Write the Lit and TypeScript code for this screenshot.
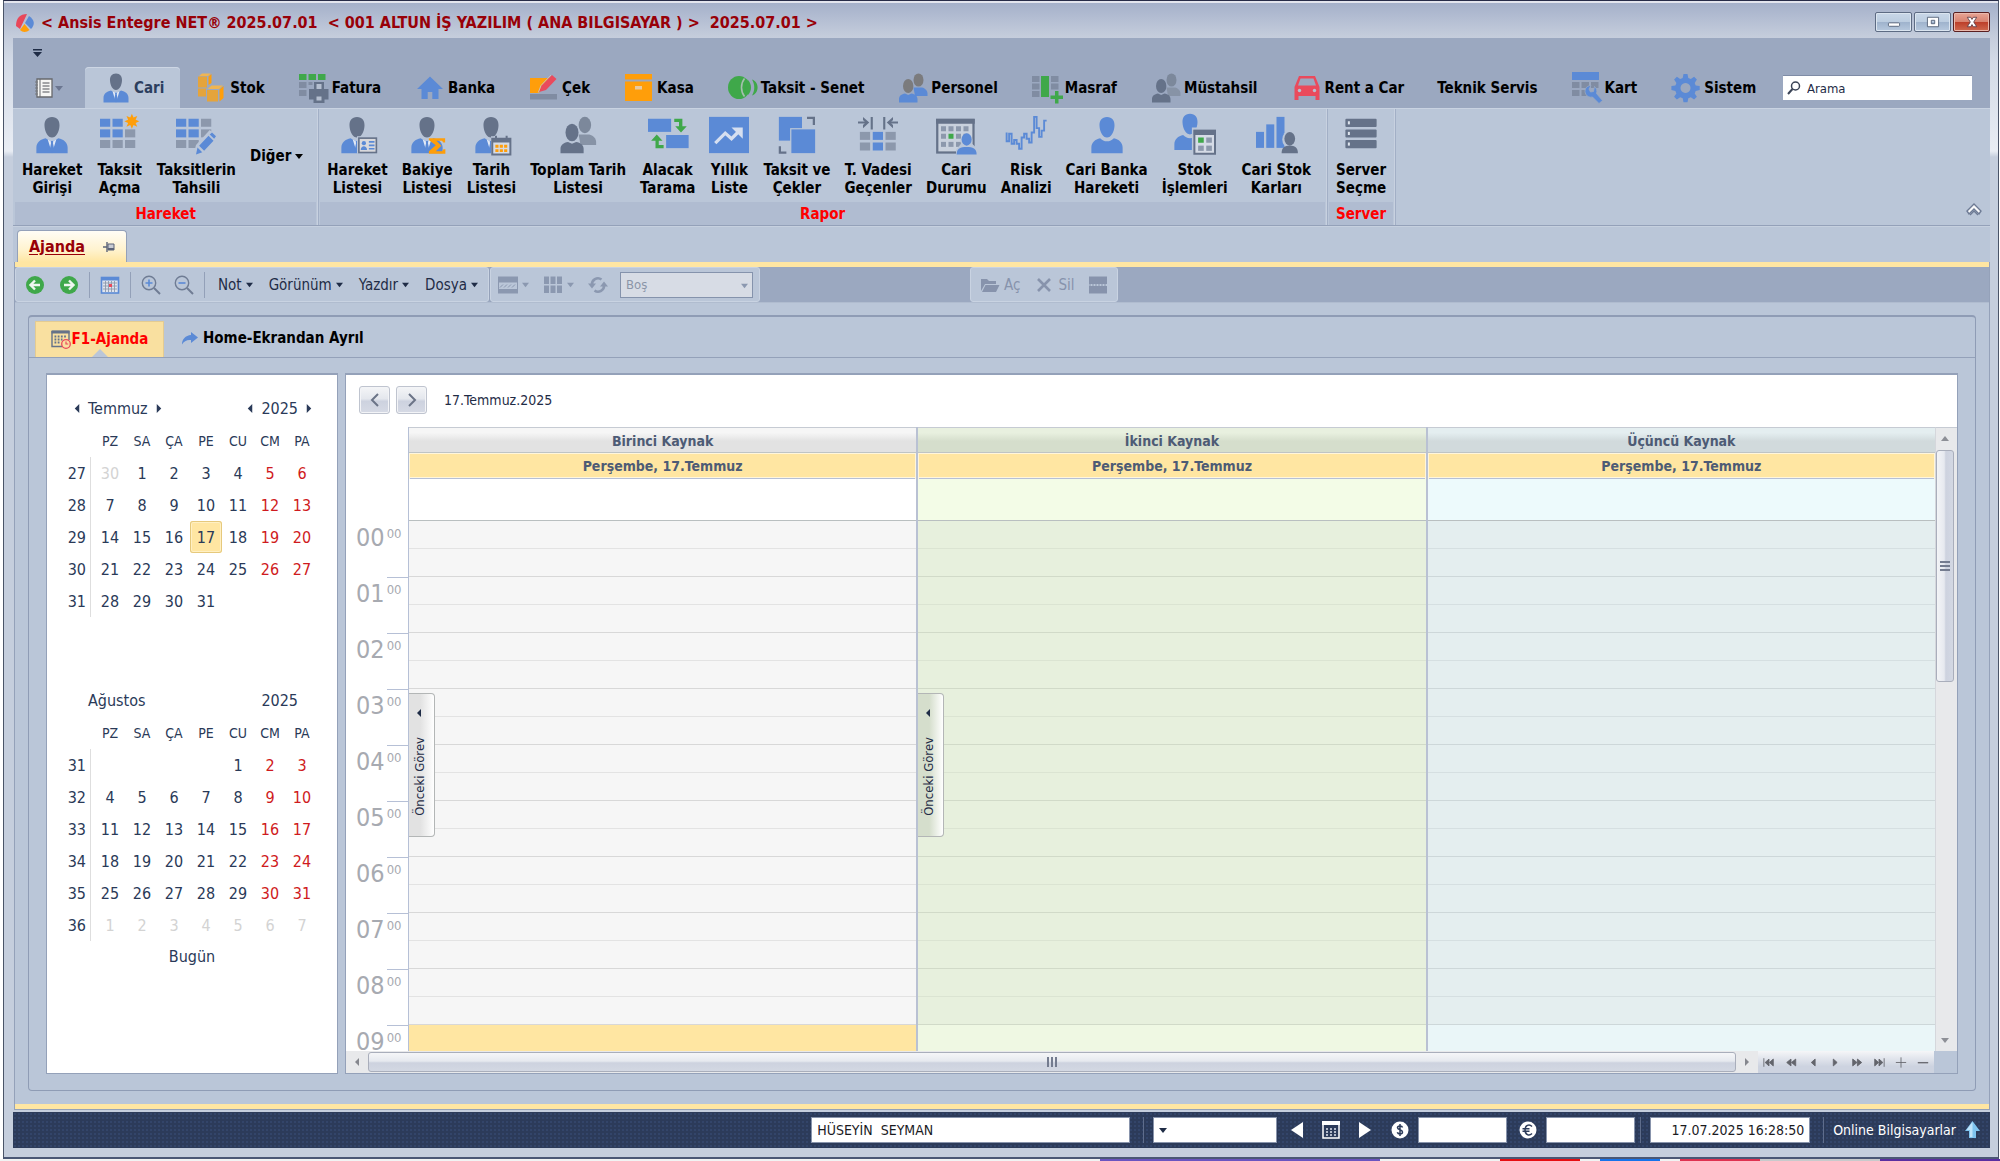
import { LitElement, html, svg, css, nothing } from "lit";
import { customElement } from "lit/decorators.js";
import { classMap } from "lit/directives/class-map.js";

const BLUE = "#5b8ad6";
const GRAY = "#657289";
const SOFT = "#8c98ac";
const GREEN = "#3fa84a";
const ORANGE = "#ff9e0a";
const RED = "#ea4a5c";
const PAPER = "#bac6d8";

const bust = (head: string, body: string) => svg`
  <path fill=${head} d="M16 1.5c-4.2 0-6.2 3-6 7 .2 5 2.800 9.500 6 9.500s5.800-4.500 6-9.500c.2-4-1.800-7-6-7z"/>
  <path fill=${body} d="M10.500 18.500c1.500 1.600 3.300 2.500 5.500 2.500s4-.9 5.500-2.500c4 .8 7 3.500 7 7.500v4.500h-25V26c0-4 3-6.700 7-7.500z"/>`;
const suit = () => svg`
  <path fill=${GRAY} d="M16 1.500c-4.200 0-6.200 3-6 7 .2 5 2.800 9.500 6 9.500s5.800-4.500 6-9.500c.2-4-1.800-7-6-7z"/>
  <path fill=${BLUE} d="M11 18.500c1.400 1.300 3 2 5 2s3.600-.7 5-2c4.400.8 7.500 3.500 7.500 7.500v4.500h-25V26c0-4 3.100-6.700 7.500-7.500z"/>
  <path fill="#e3eaf6" d="M12.600 19.500c1.100.6 2.200 1 3.400 1s2.300-.4 3.400-1L16.800 28h-1.600z"/>
  <path fill=${BLUE} d="M15 20.800h2l-.2 1.700 1 5-1.800 3-1.800-3 1-5z"/>`;
const pair = (c1: string, c2: string, b1: string, b2: string) => svg`
  <ellipse cx="21.500" cy="8" rx="5" ry="6.600" fill=${c2}/>
  <path fill=${b2} d="M16.500 15.500h8.500c3 .8 5.500 3 5.500 6V24H18z"/>
  <ellipse cx="11.200" cy="14" rx="5.200" ry="7" fill=${c1}/>
  <path fill=${b1} d="M8 21.500l3.200 1.500 3.300-1.500c3.500.5 6 2.500 6 5.500v3.500H2V27c0-3 2.500-5 6-5.500z"/>`;
const cell = (x: number, y: number, c: string, w = 8.2, h = 6.4) =>
  svg`<rect x=${x} y=${y} width=${w} height=${h} fill=${c}/>`;

const icons: Record<string, unknown> = {
  person: suit(),
  bust: bust(BLUE, BLUE),
  pair: pair(GRAY, "#7c889b", GRAY, "#8793a6"),
  staff: pair("#7b7b7d", "#7b7b7d", BLUE, BLUE),
  personCard: svg`${suit()}
    <rect x="16" y="17" width="17" height="14" fill=${PAPER}/>
    <rect x="17.500" y="18.500" width="14" height="11.500" fill="#d9d9dc" stroke=${GRAY} stroke-width="1.300"/>
    <circle cx="21.500" cy="22.500" r="1.700" fill=${BLUE}/><path d="M19 28c0-4 5-4 5 0z" fill=${BLUE}/>
    <path d="M25.500 21.500h4.500M25.500 24.300h4.500M25.500 27h4.500" stroke=${BLUE} stroke-width="1.300"/>`,
  personSum: svg`${suit()}
    <path d="M17.500 18.500h13v3.500h-1.500l-1-1.400h-4.500l4 4-4.500 4.400h5l1.200-1.700h1.500v3.700H17.500v-2l5.500-4.800-5.500-4.200z" fill=${ORANGE}/>`,
  personCalendar: svg`${suit()}
    <rect x="16" y="17" width="16" height="15" fill=${PAPER}/>
    <path d="M17 19h14.500v12.500H17zM20 16.500v4M28.500 16.500v4" fill="#d5dbe6" stroke=${GRAY} stroke-width="1.600"/>
    <path d="M17 19h14.500v3H17z" fill=${GRAY}/>
    <path d="M19.500 25h2.500M23 25h2.500M26.500 25h2.500M19.500 28.500h2.500M23 28.500h2.500M26.500 28.500h2.500" stroke=${ORANGE} stroke-width="2.300"/>`,
  gridNew: svg`${cell(0, 3, BLUE)}${cell(10, 3, BLUE)}${cell(0, 11.5, BLUE)}${cell(10, 11.5, BLUE)}${cell(20, 11.5, SOFT)}
    ${cell(0, 20, SOFT)}${cell(10, 20, SOFT)}${cell(20, 20, SOFT)}
    <path fill=${ORANGE} d="M25.500-1l1.300 3 3-1.300L28.500 3.700l3 1.300-3 1.300 1.300 3-3-1.300-1.300 3-1.300-3-3 1.300 1.300-3-3-1.300 3-1.300-1.300-3 3 1.300z"/>`,
  gridEdit: svg`${cell(0, 3, BLUE)}${cell(10, 3, BLUE)}${cell(20, 3, SOFT)}${cell(0, 11.5, BLUE)}${cell(10, 11.5, BLUE)}
    ${cell(20, 11.5, SOFT)}${cell(0, 20, SOFT)}${cell(10, 20, SOFT)}
    <path d="M14 32l2-8L27 12l6 5-11 13z" fill=${PAPER}/>
    <path d="M16 31.500l1.200-5.500 3.800 3.800zM18.500 24.500l7.500-8 4 4-7.500 8zM27 15.500l1.800-1.500 3.200 3-1.500 2z" fill=${BLUE}/>`,
  swap: svg`<rect x="0" y="3" width="18.500" height="10.500" fill=${BLUE}/><rect x="14.500" y="16" width="18" height="10.500" fill=${BLUE}/>
    <path d="M21 3h6.500v6H31l-4.600 5-4.600-5h3V5.500H21zM12.500 26.500H6v-6H2.500L7 15.500l4.600 5H8.600V24h3.900z" fill=${GREEN}/>`,
  chart: svg`<rect x="0" y="1.500" width="32" height="29" fill=${BLUE}/>
    <path d="M5 22.500l8-8 5 4.500 5-5" fill="none" stroke="#d6dff0" stroke-width="2.600"/><path d="M18 10h9v9z" fill="#d6dff0"/>`,
  layers: svg`<rect x="1.500" y="1.500" width="18.500" height="19" fill=${BLUE}/><rect x="10.500" y="10.500" width="21" height="21" fill=${PAPER}/>
    <rect x="11.500" y="11.500" width="19" height="19" fill=${BLUE}/>
    <path d="M24 2.300h5.500V8M2.300 25v5H7.500" fill="none" stroke=${GRAY} stroke-width="1.800"/>`,
  due: svg`${cell(1.5, 13.5, SOFT)}${cell(11.8, 13.5, BLUE)}${cell(22, 13.5, SOFT)}${cell(1.5, 22, SOFT)}${cell(11.8, 22, BLUE)}${cell(22, 22, SOFT)}
    <path d="M0 6h7M25 6h7M11 1.500v10M21 1.500v10" stroke=${GRAY} stroke-width="1.700"/>
    <path d="M4 1.500l5 4.500-5 4.500V8l2-2-2-2zM28 1.500L23 6l5 4.500V8l-2-2 2-2z" fill=${GRAY}/>`,
  calendarPerson: svg`<rect x="1" y="4" width="29" height="26" fill="#c9d1dd" stroke=${GRAY} stroke-width="1.800"/><rect x="0" y="3" width="31" height="4" fill=${GRAY}/>
    ${[4, 10, 16, 22].map((x) => [9, 15, 21.5].map((y) => cell(x, y, x === 10 && y === 15 ? GREEN : SOFT, 4, 4)))}
    <path d="M16 32v-4l4-5c-3-9 11-11 9 0l5 5v4z" fill=${PAPER}/>
    <ellipse cx="24.500" cy="19.500" rx="4" ry="5" fill=${BLUE}/><path d="M16.500 31.500c0-5 3-6 8-6s8 1 8 6z" fill=${BLUE}/>`,
  risk: svg`<path d="M.5 14v7h2v-6h2v8h2v-3h2v3h2v4h2v-9h2v-3h2v4h2v3h2v-8h2V1.500h2v9h2v7h2v-5h2v-8h2" fill="none" stroke=${BLUE} stroke-width="1.500"/>`,
  bustCalendar: svg`<g transform="translate(-4 -2.500)">${bust(BLUE, BLUE)}</g><rect x="13.500" y="10" width="20" height="22" fill=${PAPER}/>
    <rect x="15.500" y="12.500" width="16.500" height="18.500" fill="#d5dbe6" stroke=${GRAY} stroke-width="1.600"/><rect x="15" y="12" width="17.500" height="4" fill=${GRAY}/>
    ${cell(18.5, 18, GREEN, 4.5, 4.2)}${cell(25, 18, SOFT, 4.5, 4.2)}${cell(18.5, 24.5, SOFT, 4.5, 4.2)}${cell(25, 24.5, SOFT, 4.5, 4.2)}`,
  barsPerson: svg`${cell(0, 13.5, BLUE, 6.4, 12.8)}${cell(8.2, 7.5, BLUE, 6.4, 18.8)}${cell(16.4, 1.5, BLUE, 6.4, 24.8)}
    <ellipse cx="27" cy="19.500" rx="6" ry="7" fill=${PAPER}/>
    <ellipse cx="27" cy="19" rx="4.300" ry="5.500" fill=${GRAY}/><path d="M20.500 30.500c0-5 2.500-6 6.500-6s6.500 1 6.500 6z" fill=${GRAY}/>`,
  server: svg`${[3, 11.5, 20].map((y) => svg`<rect x="3.500" y=${y} width="25" height="6.500" rx=".8" fill=${GRAY}/><rect x="5.500" y=${y + 2} width="1.600" height="2.500" fill="#dfe5ee"/>`)}`,

  boxes: svg`<path d="M2 4.500h9v11H2z" fill="#e5a43c"/><path d="M3 4l3-2.500h9L12 4z" fill="#f0b552"/><path d="M12.500 4.500l3-2.500v9l-3 2z" fill=${ORANGE}/>
    <path d="M2 16.500h8v8H2z" fill="#e5a43c"/><path d="M11 18h11v11.500H11z" fill="#e5a43c"/>
    <path d="M11.500 17l4-3.500h11.500L23 17z" fill="#f0b552"/><path d="M23.500 17.500l4-3.500v12l-4 3.500z" fill=${ORANGE}/>`,
  printer: svg`${cell(1, 2, GREEN, 7.5, 6)}${cell(10.5, 2, GREEN, 7.5, 6)}${cell(20, 2, GREEN, 7.5, 6)}${cell(1, 10, "#808ca2", 7.5, 6)}${cell(10.5, 10, "#808ca2", 4, 3)}${cell(1, 18, "#808ca2", 7.5, 6)}
    <path d="M16 10h10v7h4.500v10.500h-4V31h-11v-3.500H11V17h5z" fill=${GRAY}/><path d="M18.500 12h5v5h-5zM18.500 24.500h5v4h-5z" fill="#b5bfd0"/>`,
  home: svg`<path d="M16 4.500L3 17h4.500v10h6.200v-7h4.600v7h6.200V17H29z" fill=${BLUE}/>`,
  cheque: svg`<path d="M2 6h19L11 21H2z" fill=${ORANGE}/><path d="M11 20l2.500-6.500L24 3l4.500 4L18 18z" fill=${RED}/><path d="M10.300 20.500l2.700-7L23 3" fill="none" stroke="#c9c0b8" stroke-width="1"/><rect x="2" y="22" width="27" height="5.500" fill="#808ca2"/>`,
  archive: svg`<rect x="2" y="2" width="27" height="5.500" fill=${ORANGE}/><rect x="2" y="9.500" width="27" height="19.500" fill=${ORANGE}/><rect x="12" y="14" width="7" height="3.500" fill="#e8c9a0"/>`,
  coins: svg`<ellipse cx="12" cy="15.500" rx="11" ry="11.500" fill=${GREEN}/><path d="M17.500 6.500c-4 5-4 13 0 18" stroke="#a5bfae" stroke-width="1.600" fill="none"/>
    <path d="M21 8c4 4 4 11 0 15-4-4-4-11 0-15z" fill=${GREEN}/><path d="M25 7.500c7 2 8 13.500 0 16 3-5 3-11 0-16z" fill=${GREEN}/>`,
  columns: svg`${[4, 11.5, 19].map((y) => svg`${cell(1, y, "#808ca2", 7.5, 6)}${y < 19 ? cell(20, y, "#808ca2", 7.5, 6) : nothing}`)}
    <rect x="10" y="4" width="8" height="21" fill=${GREEN}/><path d="M24 19h3.500v4.500H32V27h-4.500v4.500H24V27h-4.500v-3.500H24z" fill=${GREEN}/>`,
  car: svg`<path d="M8 4h16l4.500 11v13h-4v-4h-17v4h-4V15z" fill=${RED}/><path d="M9.500 6.500h13l2.500 7H7z" fill="#9ba8c0"/><circle cx="8.500" cy="18.500" r="1.700" fill="#b9c0d0"/><circle cx="23.500" cy="18.500" r="1.700" fill="#b9c0d0"/>`,
  gridTool: svg`<rect x="1" y="0" width="27" height="8" fill=${BLUE}/>${cell(1, 10, "#808ca2", 7.5, 6)}${cell(10.5, 10, "#808ca2", 7.5, 6)}${cell(20, 10, "#808ca2", 7.5, 6)}${cell(1, 18, "#808ca2", 7.5, 6)}${cell(10.5, 18, "#808ca2", 5, 6)}
    <path d="M20 13.500c-5 0-7.500 5-5 9 1.500 2.500 4 3 6.500 2.500l6.500 6.500 3.500-3-6-7c1-3 0-5.500-2-7l-1 5-3 .5-1.500-3z" fill=${BLUE} stroke="#9ba8c0" stroke-width=".8"/>`,
  gear: svg`<path fill-rule="evenodd" fill=${BLUE} d="M13.500 2h4l.8 4 2.500 1 3.300-2.300 2.800 2.800-2.200 3.400 1 2.500 4 .7v4l-4 .8-1 2.500 2.200 3.300-2.800 2.800-3.300-2.200-2.500 1-.8 4h-4l-.8-4-2.500-1-3.300 2.200-2.800-2.800 2.300-3.300-1-2.500-4-.8v-4l4-.7 1-2.500-2.300-3.400 2.800-2.800L10.200 7l2.500-1zM15.500 11a5 5 0 1 0 .01 0z"/>`,
};

const icon = (name: string, cls: string) =>
  html`<svg class=${cls} viewBox="0 0 32 32" aria-hidden="true">${icons[name]}</svg>`;

const tri = (dir: "down" | "up" | "left" | "right", cls = "tri") => {
  const d = { down: "M0 2h8L4 7z", up: "M0 6h8L4 1z", left: "M6 0v8L2 4z", right: "M2 0v8l4-4z" }[dir];
  return html`<svg class=${cls} viewBox="0 0 8 8" aria-hidden="true"><path d=${d} fill="currentColor"/></svg>`;
};

interface Tool { icon: string; top: string; bottom: string; }

const TABS: [string, string][] = [
  ["person", "Cari"], ["boxes", "Stok"], ["printer", "Fatura"], ["home", "Banka"], ["cheque", "Çek"],
  ["archive", "Kasa"], ["coins", "Taksit - Senet"], ["staff", "Personel"], ["columns", "Masraf"],
  ["pair", "Müstahsil"], ["car", "Rent a Car"], ["", "Teknik Servis"], ["gridTool", "Kart"], ["gear", "Sistem"],
];

const ENTRY: Tool[] = [
  { icon: "person", top: "Hareket", bottom: "Girişi" },
  { icon: "gridNew", top: "Taksit", bottom: "Açma" },
  { icon: "gridEdit", top: "Taksitlerin", bottom: "Tahsili" },
];

const REPORT: Tool[] = [
  { icon: "personCard", top: "Hareket", bottom: "Listesi" },
  { icon: "personSum", top: "Bakiye", bottom: "Listesi" },
  { icon: "personCalendar", top: "Tarih", bottom: "Listesi" },
  { icon: "pair", top: "Toplam Tarih", bottom: "Listesi" },
  { icon: "swap", top: "Alacak", bottom: "Tarama" },
  { icon: "chart", top: "Yıllık", bottom: "Liste" },
  { icon: "layers", top: "Taksit ve", bottom: "Çekler" },
  { icon: "due", top: "T. Vadesi", bottom: "Geçenler" },
  { icon: "calendarPerson", top: "Cari", bottom: "Durumu" },
  { icon: "risk", top: "Risk", bottom: "Analizi" },
  { icon: "bust", top: "Cari Banka", bottom: "Hareketi" },
  { icon: "bustCalendar", top: "Stok", bottom: "İşlemleri" },
  { icon: "barsPerson", top: "Cari Stok", bottom: "Karları" },
];

const DAYS = ["PZ", "SA", "ÇA", "PE", "CU", "CM", "PA"];

interface Month { name: string; year: string; nav: boolean; firstWeek: number; weeks: number; offset: number; length: number; prev: number; trailing: boolean; today: number; }

const MONTHS: Month[] = [
  { name: "Temmuz", year: "2025", nav: true, firstWeek: 27, weeks: 5, offset: 1, length: 31, prev: 30, trailing: false, today: 17 },
  { name: "Ağustos", year: "2025", nav: false, firstWeek: 31, weeks: 6, offset: 4, length: 31, prev: 0, trailing: true, today: 0 },
];

const RESOURCES = [
  { name: "Birinci Kaynak", tone: "plain", previous: true },
  { name: "İkinci Kaynak", tone: "green", previous: true },
  { name: "Üçüncü Kaynak", tone: "aqua", previous: false },
];
const HOURS = Array.from({ length: 10 }, (_, i) => String(i).padStart(2, "0"));

const FONT = css`
  * { box-sizing: border-box; }
  button, input, select { font: inherit; color: inherit; margin: 0; border-radius: 0; }
  button { background: none; border: 0; padding: 0; display: inline-flex; align-items: center; justify-content: center; }
  svg { display: block; flex: none; overflow: visible; }
  .tri { width: 8px; height: 8px; }
`;

@customElement("ribbon-bar")
export class RibbonBar extends LitElement {
  static styles = [FONT, css`
    :host { display: block; font-weight: bold; font-size: 15px; color: #000; }
    .head { background: #9ba8c0; }
    .quick { height: 29px; display: flex; align-items: center; padding-left: 20px; color: #1f2c46; }
    .quick svg { width: 9px; height: 8px; }
    .tabs { height: 41px; display: flex; align-items: stretch; }
    .file { width: 72px; gap: 2px; color: #6b7690; }
    .file .sheet { width: 18px; height: 20px; }
    .tab { padding: 0 17px 0 16px; gap: 2px; white-space: nowrap; height: 41px; border: 0; }
    .tab.on { padding: 0 16px 0 15px; background: #bac6d8; color: #2c3e5e; border-radius: 4px 4px 0 0; box-shadow: inset 0 1px #cdd6e4; }
    .tabIcon { width: 32px; height: 32px; }
    .search { margin: 8px 18px 8px auto; width: 189px; height: 25px; background: #fff; border-top: 1px solid #7f8ca6; display: flex; align-items: center; padding-left: 4px; gap: 6px; }
    .search svg { width: 14px; height: 14px; }
    .search input { border: 0; outline: 0; background: none; width: 100%; min-width: 0; padding: 0; font-weight: normal; font-size: 13px; }
    .search input::placeholder { color: #1f2c46; opacity: 1; }
    .body { height: 118px; display: flex; background: #bac6d8; border-top: 1px solid #c9d3e2; border-bottom: 1px solid #94a1b9; }
    .group { display: flex; flex-direction: column; border-right: 1px solid #a2afc6; padding: 0 2px; box-shadow: inset -1px 0 #c8d1e0; }
    .group + .group { padding-left: 1px; }
    .tools { flex: 1; display: flex; align-items: flex-start; }
    .entry { gap: 1px; }
    .report { padding-right: 7px; }
    .caption { height: 23px; background: #b0bcd1; color: #f00; text-align: center; line-height: 24px; }
    .tool { flex-direction: column; padding: 6px 7px 0; line-height: 18px; }
    .toolIcon { width: 40px; height: 40px; margin-bottom: 6px; }
    .more { height: 93px; padding: 0 13px 0 6px; gap: 4px; }
    .collapse { margin: auto 8px 8px auto; }
    .collapse svg { width: 16px; height: 14px; }
  `];

  private tool(t: Tool) {
    return html`<button class="tool">${icon(t.icon, "toolIcon")}<span>${t.top}</span><span>${t.bottom}</span></button>`;
  }

  render() {
    return html`
      <div class="head">
        <div class="quick"><button aria-label="Hızlı erişim"><svg viewBox="0 0 9 8"><path d="M0 0h9v1.500H0zM0 3h9L4.500 8z" fill="currentColor"/></svg></button></div>
        <div class="tabs" role="tablist">
          <button class="file" aria-label="Dosya">
            <svg class="sheet" viewBox="0 0 18 20"><path d="M2 1h15v18H2z" fill="#f6f6f4" stroke="#67686c" stroke-width="1.300"/><path d="M5 1v18" stroke="#67686c"/><path d="M7.500 5h7M7.500 8h7M7.500 11h7M7.500 14h7" stroke="#505258" stroke-width="1.200"/><path d="M0 4h3M0 7h3M0 10h3M0 13h3M0 16h3" stroke="#77787c"/></svg>
            ${tri("down")}
          </button>
          ${TABS.map(([ic, label], i) => html`
            <button role="tab" aria-selected=${i === 0} class=${classMap({ tab: true, on: i === 0 })}>${ic ? icon(ic, "tabIcon") : nothing}<span>${label}</span></button>`)}
          <label class="search">
            <svg viewBox="0 0 14 14"><circle cx="8.500" cy="5" r="4" fill="none" stroke="#3a4356" stroke-width="1.500"/><path d="M5.500 8L1 13" stroke="#3a4356" stroke-width="2"/></svg>
            <input type="search" placeholder="Arama" aria-label="Arama">
          </label>
        </div>
      </div>
      <div class="body">
        <section class="group">
          <div class="tools entry">${ENTRY.map((t) => this.tool(t))}<button class="more">Diğer ${tri("down")}</button></div>
          <div class="caption">Hareket</div>
        </section>
        <section class="group">
          <div class="tools report">${REPORT.map((t) => this.tool(t))}</div>
          <div class="caption">Rapor</div>
        </section>
        <section class="group">
          <div class="tools">${this.tool({ icon: "server", top: "Server", bottom: "Seçme" })}</div>
          <div class="caption">Server</div>
        </section>
        <button class="collapse" aria-label="Şeridi daralt"><svg viewBox="0 0 16 14"><path d="M1 8l7-7 7 7-2 3-5-5-5 5z" fill="#f7f8fa" stroke="#6d7a94" stroke-width="1.400"/><path d="M4 12l4-4 4 4" fill="none" stroke="#6d7a94" stroke-width="1.400"/></svg></button>
      </div>`;
  }
}

@customElement("agenda-toolbar")
export class AgendaToolbar extends LitElement {
  static styles = [FONT, css`
    :host { display: flex; height: 36px; background: #9ba8c0; border-bottom: 1px solid #b0bccf; font-size: 15px; color: #1f2c46; }
    .bar { display: flex; align-items: center; background: #bac6d8; border: 1px solid #c9d3e2; border-radius: 3px; }
    .main { width: 474px; padding-left: 9px; }
    .views { width: 270px; margin-left: 1px; padding-left: 7px; color: #8b98b0; box-shadow: -1px 0 #94a1b9; }
    .acts { width: 148px; margin-left: 210px; padding-left: 9px; color: #8793ac; }
    .ic { width: 20px; height: 20px; }
    .round { margin-right: 14px; }
    .round + .round { margin-right: 10px; }
    .sep { width: 1px; height: 26px; background: #93a0b8; }
    .cal { margin: 0 10px; }
    .zoom { margin-left: 10px; }
    .zoom + .zoom { margin: 0 10px 0 13px; }
    .menu { gap: 4px; margin-left: 13px; white-space: nowrap; }
    .menu + .menu { margin-left: 16px; }
    .tri { width: 7px; height: 7px; }
    .drop { gap: 4px; margin-right: 14px; }
    .combo { position: relative; margin-left: 12px; }
    select { appearance: none; width: 133px; height: 26px; padding: 0 5px; border: 1px solid #8593ac; background: #d7dce5; color: #8b95a8; opacity: 1; font-size: 13px; display: block; }
    .combo .tri { position: absolute; right: 5px; top: 10px; }
    .act { gap: 4px; margin-right: 14px; }
  `];

  render() {
    const round = (d: string, label: string) => html`<button class="round" aria-label=${label}><svg class="ic" viewBox="0 0 20 20"><circle cx="10" cy="10" r="9" fill=${GREEN}/><path d=${d} fill="none" stroke="#eef6ee" stroke-width="2.400"/></svg></button>`;
    const lens = (plus: boolean) => html`<button class="zoom" aria-label=${plus ? "Yakınlaştır" : "Uzaklaştır"}><svg class="ic" viewBox="0 0 20 20"><circle cx="8" cy="8" r="6.700" fill="none" stroke="#6f7c94" stroke-width="1.400"/><path d="M13 13l6 6" stroke="#6f7c94" stroke-width="2"/><path d=${plus ? "M4.500 8h7M8 4.500v7" : "M4.500 8h7"} stroke=${BLUE} stroke-width="1.600"/></svg></button>`;
    return html`
      <div class="bar main">
        ${round("M15 10H6M10 5.500L5.500 10l4.500 4.500", "Geri")}${round("M5 10h9M10 5.500l4.500 4.500-4.500 4.500", "İleri")}
        <i class="sep"></i>
        <button class="cal" aria-label="Bugüne git"><svg class="ic" viewBox="0 0 20 20"><rect x="1.500" y="2.500" width="17" height="15.500" fill="#dfe4ee" stroke=${BLUE} stroke-width="1.600"/><path d="M1 2h18v3.500H1z" fill=${BLUE}/><path d="M3 8h14M3 11h14M3 14h14M5.500 6v11M8.500 6v11M11.500 6v11M14.500 6v11" stroke="#8c98ac" stroke-width=".9"/><rect x="9" y="9" width="3" height="3" fill=${RED}/></svg></button>
        <i class="sep"></i>
        ${lens(true)}${lens(false)}
        <i class="sep"></i>
        ${["Not", "Görünüm", "Yazdır", "Dosya"].map((m) => html`<button class="menu">${m}${tri("down")}</button>`)}
      </div>
      <div class="bar views">
        <button class="drop" aria-label="Görünüm düzeni"><svg class="ic" viewBox="0 0 20 20"><path d="M0 1.500h20v6H0zM0 14h20v4.500H0z" fill="currentColor"/><path d="M.5 7v8M19.500 7v8" stroke="currentColor"/><path d="M2 12.500l3-3M6 12.500l3-3M10 12.500l3-3M14 12.500l3-3" stroke="currentColor"/></svg>${tri("down")}</button>
        <button class="drop" aria-label="Gruplama"><svg class="ic" viewBox="0 0 20 20">${[1, 7.5, 14].map((x) => svg`<rect x=${x} y="1.500" width="5" height="7.500" fill="currentColor"/><rect x=${x} y="10.500" width="5" height="7.500" fill="currentColor"/>`)}</svg>${tri("down")}</button>
        <button aria-label="Yenile"><svg class="ic" viewBox="0 0 20 20"><path d="M4 10a6 6 0 0 1 9.500-5.500M16 10a6 6 0 0 1-9.500 5.500" fill="none" stroke="currentColor" stroke-width="2.600"/><path d="M0 8.500h8l-4 5zM12 11.500h8l-4-5z" fill="currentColor"/></svg></button>
        <label class="combo"><select disabled aria-label="Kaynak filtresi"><option>Boş</option></select>${tri("down")}</label>
      </div>
      <div class="bar acts">
        <button class="act"><svg class="ic" viewBox="0 0 20 20"><path d="M1 4h6l2 2h7v3H5l-4 7zM5.500 10H19.500l-3.500 7H2z" fill="currentColor"/></svg>Aç</button>
        <button class="act"><svg class="ic" viewBox="0 0 20 20"><path d="M4 4l12 12M16 4L4 16" stroke="currentColor" stroke-width="2.600"/></svg>Sil</button>
        <button aria-label="Böl"><svg class="ic" viewBox="0 0 20 20"><path d="M1 1.500h18V9H1zM1 11h18v7.500H1z" fill="currentColor"/><path d="M1 10h18" stroke="currentColor" stroke-width="1" stroke-dasharray="2 1"/></svg></button>
      </div>`;
  }
}

@customElement("date-navigator")
export class DateNavigator extends LitElement {
  static styles = [FONT, css`
    :host { display: block; width: 292px; flex: none; background: #fff; border: 1px solid #94a1b9; border-top-width: 2px; padding: 16px 15px 0; color: #2a3a58; font-size: 16px; }
    .month { margin-bottom: 66px; }
    .month.last { margin-bottom: 0; }
    .title { display: flex; justify-content: space-between; height: 34px; align-items: center; }
    .pick { display: flex; align-items: center; gap: 6px; }
    .pick .tri { width: 10px; height: 9px; }
    .from { padding-left: 10px; }
    .to { padding-right: 8px; }
    table { border-collapse: collapse; table-layout: fixed; }
    th, td { width: 32px; height: 32px; padding: 0; text-align: center; font-weight: normal; }
    thead th { font-size: 14px; }
    tbody th { text-align: right; padding-right: 8px; background: linear-gradient(#dedede, #dedede) no-repeat right 3px top / 1px 100%; }
    .end { color: #cf1a20; }
    .out { color: #d3d3d3; }
    .now { background: #ffe6a2; box-shadow: inset 0 0 0 1px #e6c97c, inset 0 0 0 2px #fff0c4; border-radius: 3px; }
    .today { display: flex; width: 100%; height: 30px; }
  `];

  private day(m: Month, w: number, d: number) {
    const n = w * 7 + d + 1 - m.offset;
    let text: number | string = n;
    let out = false;
    if (n < 1) { text = m.prev ? m.prev + n : ""; out = true; }
    else if (n > m.length) { text = m.trailing ? n - m.length : ""; out = true; }
    return html`<td class=${classMap({ out, end: !out && d > 4, now: n === m.today && !out })}>${text}</td>`;
  }

  private month(m: Month, last: boolean) {
    const pick = (cls: string, text: string) => html`
      <div class="pick ${cls}">
        ${m.nav ? html`<button aria-label="Önceki">${tri("left")}</button>` : html`<i class="tri"></i>`}
        <span>${text}</span>
        ${m.nav ? html`<button aria-label="Sonraki">${tri("right")}</button>` : html`<i class="tri"></i>`}
      </div>`;
    return html`
      <div class=${classMap({ month: true, last })}>
        <div class="title">${pick("from", m.name)}${pick("to", m.year)}</div>
        <table>
          <thead><tr><td></td>${DAYS.map((d) => html`<th scope="col">${d}</th>`)}</tr></thead>
          <tbody>${Array.from({ length: m.weeks }, (_, w) => html`
            <tr><th scope="row">${m.firstWeek + w}</th>${DAYS.map((_d, d) => this.day(m, w, d))}</tr>`)}</tbody>
        </table>
      </div>`;
  }

  render() {
    return html`${MONTHS.map((m, i) => this.month(m, i === MONTHS.length - 1))}<button class="today">Bugün</button>`;
  }
}

@customElement("day-scheduler")
export class DayScheduler extends LitElement {
  static styles = [FONT, css`
    :host { display: flex; flex-direction: column; flex: 1; min-width: 0; background: #fff; border: 1px solid #94a1b9; border-top-width: 2px; color: #1f2c46; }
    .nav { height: 52px; flex: none; display: flex; align-items: center; padding: 0 13px 2px; font-size: 14px; }
    .nav button { width: 31px; height: 28px; margin-right: 6px; border: 1px solid #bfc4cf; border-radius: 3px; background: linear-gradient(#f4f5f7, #e4e7ed 45%, #cdd2df 55%, #d6dae5); box-shadow: inset 0 0 0 1px #f3f4f7; }
    .nav svg { width: 10px; height: 14px; }
    .nav span { margin-left: 11px; }
    .main { flex: 1; min-height: 0; display: flex; overflow: hidden; }
    .hours { width: 63px; flex: none; padding-top: 94px; border-right: 1px solid #b6c0d6; overflow: hidden; }
    .hour { height: 56px; display: flex; padding-left: 10px; color: #a7aab1; font-size: 25px; line-height: 34px; position: relative; }
    .hour sup { font-size: 13px; line-height: 26px; vertical-align: top; margin-left: 2px; }
    .hour + .hour::before { content: ""; position: absolute; right: 0; top: 0; width: 21px; height: 1px; background: #b6c0d6; }
    .col { flex: 1; min-width: 0; position: relative; border-right: 2px solid #b9c1d3; --slot: #f6f6f6; --work: #ffe6a2; --day: #fff; --line: #e3e3e3; --strong: #d8d8d8; --h1: #f6f6f6; --h2: #e2e2e2; }
    .aqua { border-right: 0; }
    .green { --slot: #e7f0dd; --work: #eff8e3; --day: #f3fce7; --line: #dbe4d2; --strong: #d1dac8; --h1: #e8f0df; --h2: #d5decc; }
    .aqua { --slot: #e4eeef; --work: #eaf6f8; --day: #edfafc; --line: #d5dfe1; --strong: #cdd7d9; --h1: #e4eef0; --h2: #d1dadc; }
    .res, .date { text-align: center; font-weight: bold; font-size: 14px; color: #4d5b75; }
    .res { height: 26px; line-height: 26px; background: linear-gradient(var(--h1), var(--h1) 20%, var(--h2) 55%, var(--h2)); border-top: 1px solid #c6cbd3; border-bottom: 1px solid #bfc4c4; }
    .date { height: 26px; line-height: 25px; background: #ffe6a2; border: 1px solid #fff6dc; border-bottom: 0; box-shadow: inset 0 -1px #b6c0d6, inset 0 -2px #fff6dc; }
    .all { height: 42px; background: var(--day); border-bottom: 1px solid #b9bfc0; }
    .slot { height: 28px; background: var(--slot); border-bottom: 1px solid var(--line); }
    .slot:nth-child(odd) { border-bottom-color: var(--strong); }
    .slot.work { background: var(--work); border-bottom-color: var(--work); }
    .prev { position: absolute; left: 0; top: 266px; width: 26px; height: 144px; flex-direction: column; justify-content: flex-start; border: 1px solid #b3b6b6; border-left: 0; border-radius: 0 4px 4px 0; background: linear-gradient(90deg, var(--h2), var(--h2) 45%, #fff); font-size: 13px; padding: 15px 5px 0 0; gap: 20px; }
    .prev span { writing-mode: vertical-rl; rotate: 180deg; white-space: nowrap; }
    .vbar { width: 22px; flex: none; border-left: 1px solid #d5d7dc; border-top: 1px solid #c6cbd3; background: #e8e9eb; display: flex; flex-direction: column; align-items: center; padding-right: 3px; color: #8d8f96; }
    .vbar button { height: 22px; }
    .track { flex: 1; width: 100%; }
    .vthumb { height: 40%; border: 1px solid #a9aebb; border-radius: 3px; background: linear-gradient(90deg, #f3f4f7, #e6e9ef 45%, #cdd2df 55%, #d3d8e3); display: grid; place-content: center; }
    .vthumb svg, .hthumb svg { width: 10px; height: 12px; }
    .foot { height: 22px; flex: none; display: flex; background: #e8e9eb; }
    .foot > button { width: 22px; color: #85878e; }
    .hthumb { flex: 1; height: 20px; margin-top: 1px; border: 1px solid #a9aebb; border-radius: 3px; background: linear-gradient(#f5f6f8, #e6e9ef 45%, #cdd2df 55%, #d3d8e3); display: grid; place-content: center; }
    .steps { width: 176px; display: flex; background: linear-gradient(#f5f6f8, #cdd3e0 70%); color: #63656c; }
    .steps button { flex: 1; }
    .steps svg { width: 12px; height: 9px; }
    .corner { width: 23px; background: #bac6d8; }
  `];

  render() {
    const chevron = (d: string) => html`<svg viewBox="0 0 10 14"><path d=${d} fill="none" stroke="#6b7487" stroke-width="2"/></svg>`;
    const steps: [string, string][] = [
      ["İlk", "M1 0v10M7 1v8L2.500 5zM12 1v8L7.500 5z"],
      ["Önceki sayfa", "M7 1v8L2 5zM12.500 1v8L7.500 5z"],
      ["Önceki", "M9.500 1v8L5 5z"],
      ["Sonraki", "M5 1v8l4.500-4z"],
      ["Sonraki sayfa", "M2 1v8l5-4zM7.500 1v8l5-4z"],
      ["Son", "M13 0v10M2 1v8l4.500-4zM7 1v8l4.500-4z"],
      ["Ekle", "M1 5h12M7-1v12"],
      ["Çıkar", "M1 5h12M1 5.500h12"],
    ];
    return html`
      <div class="nav">
        <button aria-label="Önceki gün">${chevron("M8 1L2 7l6 6")}</button>
        <button aria-label="Sonraki gün">${chevron("M2 1l6 6-6 6")}</button>
        <span>17.Temmuz.2025</span>
      </div>
      <div class="main">
        <div class="hours">${HOURS.map((h) => html`<div class="hour">${h}<sup>00</sup></div>`)}</div>
        ${RESOURCES.map((r) => html`
          <div class="col ${r.tone}">
            <div class="res">${r.name}</div>
            <div class="date">Perşembe, 17.Temmuz</div>
            <div class="all"></div>
            ${HOURS.map((_h, i) => [0, 1].map(() => html`<div class=${classMap({ slot: true, work: i > 8 })}></div>`))}
            ${r.previous ? html`<button class="prev">${tri("left")}<span>Önceki Görev</span></button>` : nothing}
          </div>`)}
        <div class="vbar">
          <button aria-label="Yukarı">${tri("up")}</button>
          <div class="track"><div class="vthumb"><svg viewBox="0 0 10 12"><path d="M0 2h10M0 6h10M0 10h10" stroke="#747c8f" stroke-width="2"/></svg></div></div>
          <button aria-label="Aşağı">${tri("down")}</button>
        </div>
      </div>
      <div class="foot">
        <button aria-label="Sola">${tri("left")}</button>
        <div class="hthumb"><svg viewBox="0 0 10 12"><path d="M1 1v10M5 1v10M9 1v10" stroke="#747c8f" stroke-width="2"/></svg></div>
        <button aria-label="Sağa">${tri("right")}</button>
        <div class="steps">${steps.map(([label, d]) => html`<button aria-label=${label}><svg viewBox="0 0 14 10"><path d=${d} fill="currentColor" stroke="currentColor" stroke-width="1"/></svg></button>`)}</div>
        <div class="corner"></div>
      </div>`;
  }
}

@customElement("status-strip")
export class StatusStrip extends LitElement {
  static styles = [FONT, css`
    :host { display: flex; align-items: center; justify-content: flex-end; height: 36px; background-color: #2c3b5a; background-image: radial-gradient(#33456a 1px, transparent 1px); background-size: 4px 4px; padding-right: 10px; font-size: 14px; color: #fff; }
    input, select { height: 26px; border: 1px solid #8894ac; background: #fff; color: #1b1b1f; padding: 0 5px; outline: 0; border-radius: 0; }
    select { appearance: none; width: 124px; display: block; }
    .user { width: 319px; }
    .sep { width: 1px; height: 26px; background: #5f6d8b; margin: 0 9px 0 13px; }
    .combo { position: relative; color: #1f2c46; }
    .combo .tri { position: absolute; left: 6px; top: 9px; }
    .step { margin-left: 13px; }
    .step svg { width: 14px; height: 16px; }
    .calendar { margin: 0 5px 0 18px; }
    .calendar svg, .coin svg { width: 18px; height: 18px; }
    .rate { display: flex; align-items: center; gap: 9px; margin-left: 12px; }
    .rate.first { margin-left: 19px; }
    .rate input { width: 89px; }
    .near { margin-left: 5px; }
    .clock { width: 160px; text-align: right; }
    .online { gap: 9px; white-space: nowrap; }
    .online svg { width: 15px; height: 18px; }
  `];

  render() {
    const coin = (sign: string) => html`<span class="coin"><svg viewBox="0 0 18 18"><circle cx="9" cy="9" r="8.500" fill="#fff"/><path d=${sign} fill="none" stroke="#2c3b5a" stroke-width="1.500"/></svg></span>`;
    return html`
      <input class="user" aria-label="Kullanıcı" value="HÜSEYİN  SEYMAN">
      <i class="sep"></i>
      <label class="combo"><select aria-label="Seçim"><option></option></select>${tri("down")}</label>
      <button class="step" aria-label="Önceki"><svg viewBox="0 0 14 16"><path d="M13 0v16L1 8z" fill="#fff"/></svg></button>
      <button class="calendar" aria-label="Takvim"><svg viewBox="0 0 18 18"><path d="M1 1h16v16H1z" fill="#2c3b5a" stroke="#fff" stroke-width="1.500"/><path d="M0 0h18v4H0z" fill="#fff"/><path d="M4 8h2M8 8h2M12 8h2M4 11h2M8 11h2M12 11h2M4 14h2M8 14h2M12 14h2" stroke="#dfe5ef" stroke-width="1.400"/></svg></button>
      <button class="step" aria-label="Sonraki"><svg viewBox="0 0 14 16"><path d="M1 0v16l12-8z" fill="#fff"/></svg></button>
      <label class="rate first">${coin("M11.500 6.500c-.5-2-5-2-5 .3s5 1.600 5 4.200-4.500 2.500-5.200.3M9 3v12")}<input aria-label="Dolar kuru"></label>
      <label class="rate">${coin("M13 5.500c-3-3-7-1-7 3.500s4 6.500 7 3.500M3.500 7.800h7M3.500 10.300h7")}<input aria-label="Euro kuru"></label>
      <i class="sep near"></i>
      <input class="clock" aria-label="Saat" value="17.07.2025 16:28:50">
      <i class="sep"></i>
      <button class="online">Online Bilgisayarlar<svg viewBox="0 0 15 18"><path d="M7.500 0L15 10h-4v7H4v-7H0z" fill="#7fc4ef"/><path d="M7.500 1v15H5V9H1.500z" fill="#bfe4fa"/></svg></button>`;
  }
}

@customElement("app-root")
export class AppRoot extends LitElement {
  static styles = [FONT, css`
    :host { display: flex; flex-direction: column; height: 100vh; min-height: 900px; overflow: hidden; background: #fff; font-family: "DejaVu Sans Condensed", "DejaVu Sans", sans-serif; }
    .window { flex: 1; min-height: 0; display: flex; flex-direction: column; margin: 0 1px 0 3px; padding: 0 8px 9px 9px; border: 1px solid #4a5468; border-top: 1px solid #272c48; border-bottom: 2px solid #4a5775;
      background: linear-gradient(#e3e5ee, #e3e5ee) top / 100% 2px no-repeat, linear-gradient(#a3afc9, #c5cddc 36px, #d3dae6 60px, #e9edf4 150px, #c5cedd 156px); }
    .title { height: 37px; flex: none; display: flex; align-items: center; gap: 7px; padding: 6px 0 0 3px; color: #980008; font-weight: bold; font-size: 16px; }
    .title > svg { width: 18px; height: 18px; }
    h1 { font-size: 16px; margin: 0; flex: 1; white-space: pre; }
    .sys { display: flex; gap: 2px; align-self: flex-start; margin-top: 5px; }
    .sys button { width: 37px; height: 20px; border: 1px solid #5d6b83; border-radius: 2px; background: linear-gradient(#c9d7e8, #bccde0 48%, #9fb3cd 52%, #b7c9de); box-shadow: inset 0 0 0 1px #dbe5f0; }
    .sys .close { border-color: #5a1f20; background: linear-gradient(#e8a595, #d88371 48%, #bd3f2a 52%, #cf6a50); box-shadow: inset 0 0 0 1px #eab9ad; }
    .sys svg { width: 14px; height: 12px; }
    .docs { height: 36px; flex: none; display: flex; align-items: flex-end; background: #bac6d8; padding-left: 4px; border-top: 1px solid #c6d0df; }
    .doc { height: 32px; width: 110px; gap: 18px; font-weight: bold; font-size: 16px; color: #980008; background: linear-gradient(#fffdf6, #fff3cf 60%, #ffe6a2); border: 1px solid #94a1b9; border-bottom: 0; border-radius: 4px 4px 0 0; }
    .doc u { text-underline-offset: 2px; }
    .doc svg { width: 12px; height: 10px; }
    .page { flex: 1; min-height: 0; display: flex; flex-direction: column; margin-bottom: 2px; background: #bac6d8; border: 1px solid #94a1b9; border-top: 0; margin-left: 1px; }
    .stripe { height: 5px; flex: none; background: #ffe6a2; }
    .frame { flex: 1; min-height: 0; display: flex; flex-direction: column; margin: 12px 13px 13px; border: 1px solid #8f9cb5; border-top-width: 2px; border-radius: 4px; }
    .views { height: 41px; flex: none; display: flex; align-items: flex-end; gap: 18px; padding-left: 6px; border-bottom: 1px solid #94a1b9; font-weight: bold; font-size: 15px; }
    .view { height: 36px; gap: 2px; padding-bottom: 2px; }
    .view.on { width: 129px; gap: 1px; color: #f00; background: #f9e0a0; border: 1px solid #e3cb92; border-bottom: 0; position: relative; }
    .view.on::after { content: ""; position: absolute; bottom: 0; left: 56px; border: 8px solid transparent; border-bottom-color: #bac6d8; border-top: 0; }
    .view svg { width: 20px; height: 20px; }
    .view .go { width: 16px; height: 14px; margin-right: 3px; }
    .body { flex: 1; min-height: 0; display: flex; gap: 7px; padding: 15px 17px 16px; }
    .below { height: 2px; flex: none; background: linear-gradient(90deg, #f1f3f3 55%, #6a54c0 55%, #6a54c0 69%, #f1f3f3 69%, #f1f3f3 75%, #e60f12 75%, #e60f12 79%, #f1f3f3 79%, #f1f3f3 80%, #1673ea 80%, #1673ea 83%, #f1f3f3 83%, #f1f3f3 84%, #de3250 84%, #de3250 88%, #c8cacc 88%, #c8cacc 94%, #5a2ea0 94%); }
  `];

  render() {
    return html`
      <div class="window">
        <header class="title">
          <svg viewBox="0 0 18 18" aria-hidden="true"><path d="M11 0C4 0 0 4 0 12l4 3z" fill="#e8475a"/><path d="M13 2c6 4 6 9 2 13L9 9z" fill=${BLUE}/><path d="M8.500 10l5 6c-3 2.500-7 2.500-9.500 0z" fill=${ORANGE}/></svg>
          <h1>&lt; Ansis Entegre NET® 2025.07.01  &lt; 001 ALTUN İŞ YAZILIM ( ANA BILGISAYAR ) &gt;  2025.07.01 &gt;</h1>
          <div class="sys">
            <button aria-label="Simge durumuna küçült"><svg viewBox="0 0 16 14"><rect x="1.500" y="8" width="13" height="4" rx="1" fill="#fff" stroke="#4d5a70"/></svg></button>
            <button aria-label="Ekranı kapla"><svg viewBox="0 0 16 14"><path fill-rule="evenodd" d="M1.500 1.500h13v11h-13zM6 5v4h4V5z" fill="#fff" stroke="#4d5a70"/></svg></button>
            <button class="close" aria-label="Kapat"><svg viewBox="0 0 16 14"><path d="M2.500 1.500h4L8 4l1.500-2.500h4L10 7l3.500 5.500h-4L8 10l-1.500 2.500h-4L6 7z" fill="#fff" stroke="#5b3a44"/></svg></button>
          </div>
        </header>
        <ribbon-bar></ribbon-bar>
        <div class="docs"><button class="doc"><u>Ajanda</u><svg viewBox="0 0 12 10"><path d="M0 5h4M4 0v10" stroke="#5b6378" stroke-width="1.400"/><path d="M5 2h6v6H5z" fill="#c9ccd4" stroke="#5b6378"/><path d="M5 6h6v2H5z" fill="#5b6378"/></svg></button></div>
        <main class="page">
          <div class="stripe"></div>
          <agenda-toolbar></agenda-toolbar>
          <section class="frame">
            <nav class="views">
              <button class="view on"><svg viewBox="0 0 20 20" aria-hidden="true"><path d="M1 2.500h17V11M1 2v15.500h10" fill="none" stroke=${GRAY} stroke-width="1.400"/><path d="M.5 1.500h18v3H.5z" fill=${GRAY}/><path d="M3.500 7.500h12M3.500 10.500h8M3.500 13.500h6" stroke=${GRAY} stroke-width="1.800" stroke-dasharray="1.800 1.400"/><circle cx="15" cy="15" r="4.300" fill="#f9e0a0" stroke=${RED} stroke-width="1.300"/><path d="M15 12.500V15h2.200" fill="none" stroke=${RED} stroke-width="1.200"/></svg>F1-Ajanda</button>
              <button class="view"><svg class="go" viewBox="0 0 16 14" aria-hidden="true"><path d="M9 1l7 5.500-7 5.500V9C5 8.500 2 10 0 13.500 0 8 3.500 4.500 9 4z" fill=${BLUE}/></svg>Home-Ekrandan Ayrıl</button>
            </nav>
            <div class="body"><date-navigator></date-navigator><day-scheduler></day-scheduler></div>
          </section>
          <div class="stripe"></div>
        </main>
        <status-strip></status-strip>
      </div>
      <div class="below"></div>`;
  }
}
